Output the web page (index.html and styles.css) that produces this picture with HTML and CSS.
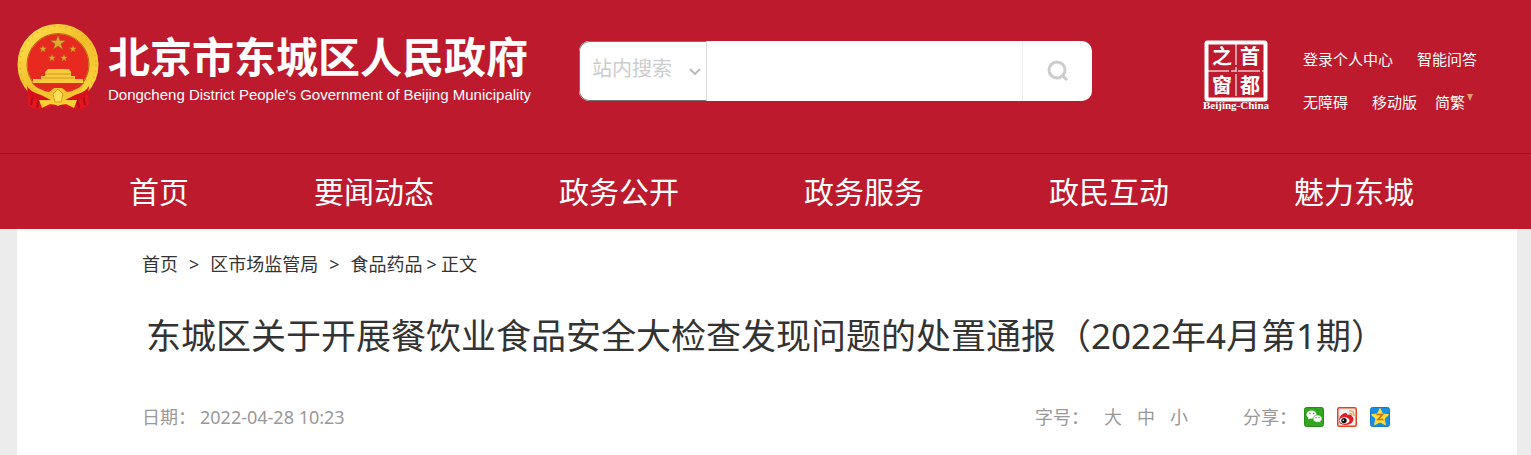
FILE: index.html
```html
<!DOCTYPE html>
<html lang="zh-CN">
<head>
<meta charset="utf-8">
<title>北京市东城区人民政府</title>
<link rel="stylesheet" href="styles.css">
</head>
<body>
<header class="site-header">
  <div class="top-bar">
    <a class="brand" href="#">
      <svg class="emblem" viewBox="0 0 82 86" aria-hidden="true">
        <defs>
          <linearGradient id="gold" x1="0" y1="0" x2="1" y2="1">
            <stop offset="0" stop-color="#ffe14a"/>
            <stop offset=".5" stop-color="#f2bc2b"/>
            <stop offset="1" stop-color="#fbd83c"/>
          </linearGradient>
          <path id="star" d="M0-10 2.3-3.1H9.5L3.7 1.2 5.9 8.1 0 3.8-5.9 8.1-3.7 1.2-9.5-3.1H-2.3Z"/>
        </defs>
        <path d="M12 61 11 81 17 85 31 84 41 79 51 84 65 85 72 80 70 61Z" fill="#e5141d"/>
        <path d="M17 65 14 81M23 70 20 84M65 65 68 81M59 70 62 84" stroke="#a90f19" stroke-width="2"/>
        <circle cx="41" cy="40.500" r="35.500" fill="#e8291f" stroke="url(#gold)" stroke-width="10"/>
        <circle cx="41" cy="40.500" r="38" fill="none" stroke="#e4a724" stroke-width="1.500" stroke-dasharray="2 4" opacity=".6"/>
        <circle cx="41" cy="40.500" r="31" fill="none" stroke="#b8651b" stroke-width="1"/>
        <g fill="#e0a92f" stroke="#96601a" stroke-width=".6">
          <use href="#star" transform="translate(41 19) scale(.8)"/>
          <use href="#star" transform="translate(26 25) scale(.4)"/>
          <use href="#star" transform="translate(56 25) scale(.4)"/>
          <use href="#star" transform="translate(35 34) scale(.4)"/>
          <use href="#star" transform="translate(47 34) scale(.4)"/>
        </g>
        <path d="M31 45H52L54 48V52H58V55H66V59H16V55H24V52H28V48Z" fill="#f8cb3a"/>
        <path d="M28 50H54M25 54H57" stroke="#d29524"/>
        <path d="M15 59H67L61 65H21Z" fill="#df2b1c"/>
        <path d="M14 60Q25 67 32 68L37 64H45L50 68Q58 67 68 60L62 70 50 74 41 70 32 74 20 70Z" fill="#f4c331"/>
        <path d="M22 76 34 77 41 68 48 77 60 76 57 84 47 79 41 82 35 79 25 84Z" fill="#f8cf35"/>
        <path d="M36 70 41 65 46 70 44 78H38Z" fill="#ffdf55" stroke="#cc8b1b" stroke-width=".8"/>
        <path d="M10 62Q13 68 24 71L34 76 20 76 11 71ZM72 62Q69 68 58 71L48 76 62 76 71 71Z" fill="#d9101b"/>
      </svg>
      <span class="brand-text">
        <span class="brand-name">北京市东城区人民政府</span>
        <span class="brand-en">Dongcheng District People's Government of Beijing Municipality</span>
      </span>
    </a>
    <form class="search" role="search">
      <div class="scope">
        <select class="scope-select" aria-label="搜索范围"><option>站内搜索</option></select>
        <svg class="scope-arrow" viewBox="0 0 12 8" aria-hidden="true"><path d="M1 1 6 6 11 1"/></svg>
      </div>
      <input class="search-input" type="text" aria-label="搜索关键词">
      <button class="search-button" type="submit" aria-label="搜索">
        <svg class="search-icon" viewBox="0 0 22 22" aria-hidden="true"><circle cx="10" cy="10" r="8"/><path d="M15.500 15.500 20 20"/></svg>
      </button>
    </form>
    <a class="capital" href="#" aria-label="首都之窗">
      <svg class="capital-logo" viewBox="0 0 70 72">
        <rect x="5.500" y="3.500" width="59" height="57" rx="1" fill="none" stroke="#fff" stroke-width="4"/>
        <path d="M35 4V60M6 32H64" stroke="#fff" stroke-width="1.500" stroke-dasharray="22 2 5 2" opacity=".75"/>
        <g class="capital-han">
          <text x="21" y="25">之</text><text x="49" y="25">首</text>
          <text x="21" y="54">窗</text><text x="49" y="54">都</text>
        </g>
        <text class="capital-en" x="35" y="70">Beijing-China</text>
      </svg>
    </a>
    <div class="tools">
      <div class="tool-row"><a href="#">登录个人中心</a><a href="#">智能问答</a></div>
      <div class="tool-row"><a href="#">无障碍</a><a href="#">移动版</a><a class="script-switch" href="#">简繁<svg class="tri" viewBox="0 0 6 7" aria-hidden="true"><path d="M0 0H6L3 7Z"/></svg></a></div>
    </div>
  </div>
  <nav class="main-nav">
    <a href="#">首页</a><a href="#">要闻动态</a><a href="#">政务公开</a><a href="#">政务服务</a><a href="#">政民互动</a><a href="#">魅力东城</a>
  </nav>
</header>
<main class="page">
  <nav class="crumbs" aria-label="当前位置">
    <a href="#">首页</a><span class="sep">&gt;</span><a href="#">区市场监管局</a><span class="sep">&gt;</span><a href="#">食品药品</a><span class="sep-tight">&gt;</span><span>正文</span>
  </nav>
  <h1 class="title">东城区关于开展餐饮业食品安全大检查发现问题的处置通报（2022年4月第1期）</h1>
  <div class="meta">
    <div class="date"><span>日期：</span><time>2022-04-28 10:23</time></div>
    <div class="size"><span class="size-label">字号：</span><button type="button">大</button><button type="button">中</button><button type="button">小</button></div>
    <div class="share">
      <span>分享：</span>
      <a href="#" aria-label="微信"><svg viewBox="0 0 20 20">
        <rect x=".5" y=".5" width="19" height="19" rx="2" fill="#32a51e" stroke="#2b8a1c"/>
        <path d="M7.500 3.500C4.500 3.500 2.500 5.300 2.500 7.500 2.500 8.900 3.300 10 4.500 10.700L4 12.500 6 11.500Q9 12 11 10.500 12.500 9 12.500 7.500C12.500 5.300 10.500 3.500 7.500 3.500Z" fill="#fff"/>
        <path d="M13.500 8C11 8 9 9.600 9 11.700S11 15.300 13.500 15.300L14.800 15.100 16.500 16 16.200 14.500Q18 13.300 18 11.700C18 9.600 16 8 13.500 8Z" fill="#fff" stroke="#32a51e" stroke-width=".6"/>
        <g fill="#32a51e"><circle cx="6" cy="6.500" r=".8"/><circle cx="9.500" cy="6.500" r=".8"/><circle cx="12" cy="10.700" r=".7"/><circle cx="15" cy="10.700" r=".7"/></g>
      </svg></a>
      <a href="#" aria-label="新浪微博"><svg viewBox="0 0 20 20">
        <rect x=".75" y=".75" width="18.500" height="18.500" rx="1.500" fill="#eee" stroke="#e8401f" stroke-width="1.500"/>
        <path d="M5 7.500Q10 4.500 10.500 8 14.500 6.500 15 9.500 17.500 11 16 14 14 18 8 18 2 17.500 2 14 2 10 5 7.500Z" fill="#e21b22"/>
        <ellipse cx="7.500" cy="13.500" rx="5" ry="3.300" fill="#fff"/>
        <circle cx="7" cy="13.600" r="2.700" fill="#111"/><circle cx="6.300" cy="13.200" r=".8" fill="#fff"/>
        <path d="M12 4Q17 3 17 9M12.500 6.500Q15 6 14.800 8.500" fill="none" stroke="#f6a536" stroke-width="1.400"/>
      </svg></a>
      <a href="#" aria-label="QQ空间"><svg viewBox="0 0 20 20">
        <rect x=".5" y=".5" width="19" height="19" rx="2" fill="#168fe4" stroke="#1977c5"/>
        <path d="M10 1.500 12.600 7 18.500 7.700 14.200 11.800 15.400 17.800 10 14.900 4.600 17.800 5.800 11.800 1.500 7.700 7.400 7Z" fill="#ffda38" stroke="#ffda38" stroke-width="1"/>
        <path d="M6.500 7.500H12.500L8 12.500H13.500" fill="none" stroke="#b97616" stroke-width="1.600"/>
      </svg></a>
    </div>
  </div>
</main>
</body>
</html>
```
FILE: styles.css
```css
* { box-sizing: border-box; }

body {
  margin: 0;
  background: #ececec;
  color: #333;
  font: 18px/24px "Noto Sans", "Noto Sans CJK SC", sans-serif;
}

a { color: inherit; text-decoration: none; }
svg { display: block; }
button, input, select { font: inherit; margin: 0; padding: 0; border: 0; background: none; color: inherit; }

.site-header { background: #bd1a2d; color: #fff; }

.top-bar {
  display: flex;
  align-items: flex-start;
  padding: 24px 54px 39px 17px;
}

.brand { display: flex; gap: 9px; flex: none; }
.emblem { width: 82px; height: 86px; }
.brand-text { display: flex; flex-direction: column; padding-top: 4px; white-space: nowrap; }
.brand-name { font: bold 42px/54px "Noto Sans CJK SC", sans-serif; }
.brand-en { font: 15px/26px "Liberation Sans", sans-serif; }

.search {
  display: flex;
  flex: 0 1 513px;
  height: 60px;
  margin: 17px 0 0 48px;
  border-radius: 10px;
  background: #fff;
  overflow: hidden;
}
.scope { position: relative; flex: 0 0 128px; }
.scope-select {
  width: 100%;
  height: 100%;
  padding: 0 0 4px 12px;
  appearance: none;
  border: 1px solid #767676;
  border-right-color: #ddd;
  border-radius: 10px 0 0 10px;
  color: #ccc;
  font-size: 20px;
}
.scope-arrow { position: absolute; right: 6px; top: 27px; width: 12px; height: 8px; fill: none; stroke: #bbb; stroke-width: 2; pointer-events: none; }
.search-input { flex: 1; min-width: 0; padding: 0 12px; color: #333; }
.search-button { display: grid; place-items: center; width: 70px; border-left: 1px solid #eee; }
.search-icon { width: 22px; height: 22px; fill: none; stroke: #ccc; stroke-width: 3; }

.capital { margin: 15px 0 0 auto; }
.capital-logo { width: 70px; height: 72px; fill: #fff; text-anchor: middle; }
.capital-han { font: bold 20px "Noto Sans CJK SC", sans-serif; }
.capital-en { font: bold 11px "Liberation Serif", serif; }

.tools { display: flex; flex-direction: column; gap: 19px; margin: 23px 0 0 32px; font-size: 15px; white-space: nowrap; }
.tool-row { display: flex; gap: 24px; }
.script-switch { display: flex; gap: 2px; margin-left: -6px; }
.tri { width: 6px; height: 7px; margin-top: 4px; fill: #d9a066; }

.main-nav {
  display: flex;
  justify-content: space-between;
  padding: 0 117px 0 129px;
  border-top: 1px solid #9a101f;
  font-size: 30px;
  line-height: 75px;
  white-space: nowrap;
}

.page { margin: 0 14px 0 17px; padding: 23px 127px 26px 125px; background: #fff; }

.crumbs { display: flex; }
.sep { margin: 0 11px; }
.sep-tight { margin: 0 4px; }

.title { margin: 35px 0 0; font-size: 35px; font-weight: 400; line-height: 50px; text-align: center; white-space: nowrap; }

.meta { display: flex; margin-top: 44px; color: #999; }
.date { display: flex; gap: 4px; }
.size { display: flex; gap: 15px; margin-left: auto; }
.size-label { white-space: nowrap; }
.size button { cursor: pointer; }
.share { display: flex; align-items: center; gap: 13px; margin-left: 55px; }
.share span { margin-right: -6px; }
.share svg { width: 20px; height: 20px; }
```
